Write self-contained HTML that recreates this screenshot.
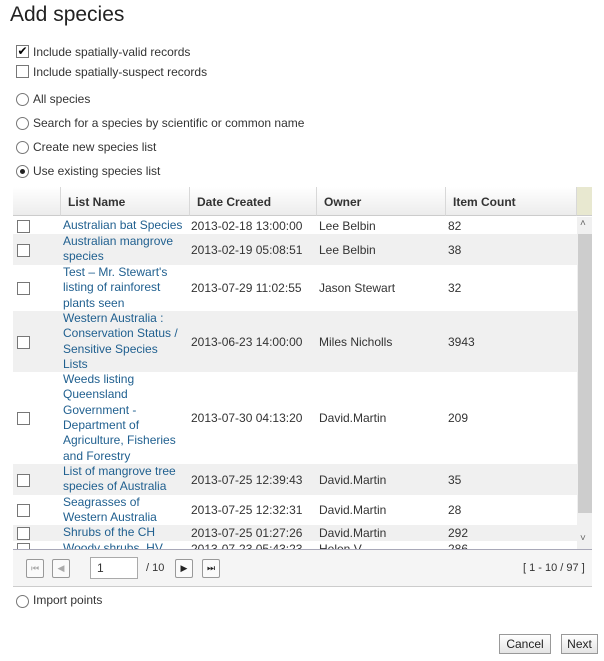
<!DOCTYPE html><html><head><style>
*{margin:0;padding:0;box-sizing:border-box}
body{width:604px;height:661px;background:#fff;font-family:"Liberation Sans",Arial,sans-serif;font-size:12px;color:#333;position:relative;overflow:hidden}
.a{position:absolute}
h1{position:absolute;left:10px;top:3px;font-size:21px;font-weight:normal;color:#222}
.cb{position:absolute;width:13px;height:13px;border:1px solid #777;background:#fff}
.rd{position:absolute;width:13px;height:13px;border:1px solid #777;border-radius:50%;background:#fff}
.lbl{position:absolute;font-size:12px;color:#333}
.hd{position:absolute;top:187px;height:29px;background:linear-gradient(#fff,#ececec);border-bottom:1px solid #ccc;border-right:1px solid #d8d8d8;font-weight:bold;color:#333;padding:8px 0 0 7px}
.row{position:absolute;left:13px;width:564px}
.row.g{background:#f0f0f0}
.c{position:absolute;line-height:15.3px}
.ln{color:#1f5f8f}
.btn{position:absolute;border:1px solid #999;background:linear-gradient(#fff,#e4e4e4);font-size:12px;color:#222;text-align:center}
.pb{position:absolute;width:18px;height:19px;border:1px solid #999;border-radius:2px;background:#fafafa;font-size:9px;text-align:center;line-height:17px}
</style></head><body>
<h1>Add species</h1>
<div class="cb" style="left:16px;top:45px;font-size:12px;line-height:11px;text-align:center;color:#000">✔</div>
<div class="lbl" style="left:33px;top:45px">Include spatially-valid records</div>
<div class="cb" style="left:16px;top:65px"></div>
<div class="lbl" style="left:33px;top:65px">Include spatially-suspect records</div>
<div class="rd" style="left:16px;top:93px"></div><div class="lbl" style="left:33px;top:92px">All species</div>
<div class="rd" style="left:16px;top:117px"></div><div class="lbl" style="left:33px;top:116px">Search for a species by scientific or common name</div>
<div class="rd" style="left:16px;top:141px"></div><div class="lbl" style="left:33px;top:140px">Create new species list</div>
<div class="rd" style="left:16px;top:165px"></div><div class="a" style="left:20px;top:169px;width:5px;height:5px;border-radius:50%;background:#222"></div><div class="lbl" style="left:33px;top:164px">Use existing species list</div>

<div class="hd" style="left:13px;width:48px"></div>
<div class="hd" style="left:61px;width:129px">List Name</div>
<div class="hd" style="left:190px;width:127px">Date Created</div>
<div class="hd" style="left:317px;width:129px">Owner</div>
<div class="hd" style="left:446px;width:131px">Item Count</div>
<div class="a" style="left:577px;top:187px;width:15px;height:29px;background:#e8e8d0;border-bottom:1px solid #ccc"></div>

<div class="a" style="left:13px;top:217px;width:564px;height:332px;overflow:hidden">
<div id="rows"></div>
</div>
<div class="a" style="left:577px;top:217px;width:15px;height:332px;background:#f0f0f0"></div>
<div class="a" style="left:578px;top:234px;width:14px;height:279px;background:#cdcdcd"></div>
<div class="a" style="left:580px;top:218px;font-size:10px;color:#666">˄</div>
<div class="a" style="left:580px;top:533px;font-size:10px;color:#666">˅</div>

<div class="a" style="left:13px;top:549px;width:579px;height:38px;background:#f5f5f5;border-top:1px solid #a8a8b8;border-bottom:1px solid #ccc"></div>
<div class="pb" style="left:26px;top:559px;color:#aaa">⏮</div>
<div class="pb" style="left:52px;top:559px;color:#aaa">◀</div>
<div class="a" style="left:90px;top:557px;width:48px;height:22px;border:1px solid #aaa;background:#fff;padding:3px 0 0 6px">1</div>
<div class="a" style="left:146px;top:562px;font-size:11px">/ 10</div>
<div class="pb" style="left:175px;top:559px;color:#222">▶</div>
<div class="pb" style="left:202px;top:559px;color:#222">⏭</div>
<div class="a" style="left:523px;top:562px;font-size:11px">[ 1 - 10 / 97 ]</div>

<div class="rd" style="left:16px;top:595px"></div><div class="lbl" style="left:33px;top:593px">Import points</div>
<div class="btn" style="left:499px;top:634px;width:52px;height:20px;line-height:18px">Cancel</div>
<div class="btn" style="left:561px;top:634px;width:37px;height:20px;line-height:18px">Next</div>

<script>
var R=[[0,17,"Australian bat Species","2013-02-18 13:00:00","Lee Belbin","82"],
[17,31,"Australian mangrove<br>species","2013-02-19 05:08:51","Lee Belbin","38"],
[48,46,"Test – Mr. Stewart's<br>listing of rainforest<br>plants seen","2013-07-29 11:02:55","Jason Stewart","32"],
[94,61,"Western Australia :<br>Conservation Status /<br>Sensitive Species<br>Lists","2013-06-23 14:00:00","Miles Nicholls","3943"],
[155,92,"Weeds listing<br>Queensland<br>Government -<br>Department of<br>Agriculture, Fisheries<br>and Forestry","2013-07-30 04:13:20","David.Martin","209"],
[247,31,"List of mangrove tree<br>species of Australia","2013-07-25 12:39:43","David.Martin","35"],
[278,30,"Seagrasses of<br>Western Australia","2013-07-25 12:32:31","David.Martin","28"],
[308,16,"Shrubs of the CH","2013-07-25 01:27:26","David.Martin","292"],
[324,16,"Woody shrubs_HV","2013-07-23 05:43:23","Helen V","286"]];
var h="";R.forEach(function(r,i){var mid=r[1]/2-7;
h+='<div class="row'+(i%2?' g':'')+'" style="left:0;top:'+r[0]+'px;height:'+r[1]+'px">'+
'<div class="cb" style="left:4px;top:'+(r[1]/2-6)+'px"></div>'+
'<div class="c ln" style="left:50px;top:'+(r[1]/2-r[2].split("<br>").length*7.65)+'px">'+r[2]+'</div>'+
'<div class="c" style="left:178px;top:'+mid+'px">'+r[3]+'</div>'+
'<div class="c" style="left:306px;top:'+mid+'px">'+r[4]+'</div>'+
'<div class="c" style="left:435px;top:'+mid+'px">'+r[5]+'</div></div>';});
document.getElementById("rows").innerHTML=h;
</script>
</body></html>
